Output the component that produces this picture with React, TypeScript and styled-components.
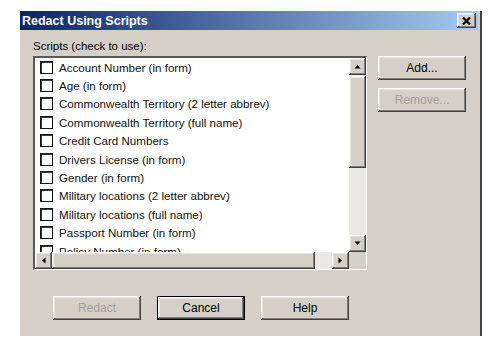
import React from "react";
import styled, { createGlobalStyle, css } from "styled-components";

const GlobalStyle = createGlobalStyle`
  html, body { margin: 0; padding: 0; background: #ffffff; }
  body { font-family: "Liberation Sans", Arial, sans-serif; }
`;

const raised = css`
  background: #d4d0c8;
  box-shadow: inset -1px -1px #404040, inset 1px 1px #ffffff,
    inset -2px -2px #808080, inset 2px 2px #e8e6e1;
`;

const Page = styled.div`
  padding: 11px 0 0 20px;
`;

const Dialog = styled.div`
  width: 460px;
  height: 325px;
  background: #d4d0c8;
  border-right: 2px solid #404040;
  display: flex;
  flex-direction: column;
`;

const TitleBar = styled.div`
  height: 19px;
  background: linear-gradient(to right, #0a246a, #a6caf0);
  display: flex;
  align-items: center;
  justify-content: space-between;
  padding: 0 2px 0 2px;
  width: 458px;
  box-sizing: border-box;
`;

const Title = styled.span`
  color: #ffffff;
  font-weight: bold;
  font-size: 12.5px;
`;

const CloseButton = styled.div`
  ${raised};
  width: 19px;
  height: 15px;
  display: flex;
  align-items: center;
  justify-content: center;
`;

const Body = styled.div`
  padding: 9px 13px 0 13px;
  display: flex;
  flex-direction: column;
`;

const Label = styled.div`
  font-size: 11.5px;
  line-height: 14px;
  color: #000;
  margin-bottom: 3px;
`;

const MainRow = styled.div`
  display: flex;
  gap: 11px;
  align-items: flex-start;
`;

const ListBox = styled.div`
  width: 334px;
  height: 214px;
  box-sizing: border-box;
  border-style: solid;
  border-width: 2px 1px 1px 2px;
  border-color: #5a5a5a #ffffff #ffffff #5a5a5a;
  background: #ffffff;
  display: grid;
  grid-template-columns: 1fr 17px;
  grid-template-rows: 1fr 17px;
`;

const Items = styled.div`
  overflow: hidden;
  background: #ffffff;
`;

const Row = styled.div`
  height: 18.4px;
  display: flex;
  align-items: center;
  gap: 6px;
  padding-left: 5px;
  font-size: 11.6px;
  color: #111;
  white-space: nowrap;
`;

const Check = styled.span`
  width: 13px;
  height: 13px;
  box-sizing: border-box;
  border: 1px solid #111;
  box-shadow: inset 1px 1px #3a3a3a;
  background: #ffffff;
  flex: none;
`;

const VScroll = styled.div`
  display: flex;
  flex-direction: column;
  background: #ebe9e4;
`;

const HScroll = styled.div`
  display: flex;
  background: #ebe9e4;
`;

const Corner = styled.div`
  background: #d4d0c8;
`;

const ArrowButton = styled.div`
  ${raised};
  width: 17px;
  height: 17px;
  flex: none;
  display: flex;
  align-items: center;
  justify-content: center;
`;

const VThumb = styled.div<{ $top: number; $size: number }>`
  ${raised};
  margin-top: ${(p) => p.$top}px;
  height: ${(p) => p.$size}px;
  flex: none;
`;

const HThumb = styled.div<{ $size: number }>`
  ${raised};
  width: ${(p) => p.$size}px;
  flex: none;
`;

const Spacer = styled.div`
  flex: 1;
`;

const SideButtons = styled.div`
  display: flex;
  flex-direction: column;
  gap: 8px;
`;

const Button = styled.div<{ $disabled?: boolean; $default?: boolean }>`
  ${raised};
  width: 88px;
  height: 24px;
  box-sizing: border-box;
  display: flex;
  align-items: center;
  justify-content: center;
  font-size: 12px;
  color: ${(p) => (p.$disabled ? "#a3a09a" : "#000")};
  ${(p) =>
    p.$default &&
    css`
      border: 1px solid #000;
    `}
`;

const BottomRow = styled.div`
  display: flex;
  gap: 16px;
  margin-top: 26px;
  padding-left: 20px;
`;

type Dir = "up" | "down" | "left" | "right";

const Arrow = ({ dir }: { dir: Dir }) => {
  const pts: Record<Dir, string> = {
    up: "0.5,4.5 3.5,1 6.5,4.5",
    down: "0.5,0.5 3.5,4 6.5,0.5",
    left: "4.5,0.5 1,3.5 4.5,6.5",
    right: "0.5,0.5 4,3.5 0.5,6.5",
  };
  const vertical = dir === "up" || dir === "down";
  return (
    <svg width={vertical ? 7 : 5} height={vertical ? 5 : 7} viewBox={vertical ? "0 0 7 5" : "0 0 5 7"}>
      <polygon points={pts[dir]} fill="#000" />
    </svg>
  );
};

const scripts = [
  "Account Number (in form)",
  "Age (in form)",
  "Commonwealth Territory (2 letter abbrev)",
  "Commonwealth Territory (full name)",
  "Credit Card Numbers",
  "Drivers License (in form)",
  "Gender (in form)",
  "Military locations (2 letter abbrev)",
  "Military locations (full name)",
  "Passport Number (in form)",
  "Policy Number (in form)",
];

export default function App() {
  return (
    <>
      <GlobalStyle />
      <Page>
        <Dialog>
          <TitleBar>
            <Title>Redact Using Scripts</Title>
            <CloseButton>
              <svg width="9" height="8" viewBox="0 0 9 8">
                <path d="M1 0.5 L8 7.5 M8 0.5 L1 7.5" stroke="#000" strokeWidth="2.2" />
              </svg>
            </CloseButton>
          </TitleBar>
          <Body>
            <Label>Scripts (check to use):</Label>
            <MainRow>
              <ListBox>
                <Items>
                  {scripts.map((s) => (
                    <Row key={s}>
                      <Check />
                      {s}
                    </Row>
                  ))}
                </Items>
                <VScroll>
                  <ArrowButton>
                    <Arrow dir="up" />
                  </ArrowButton>
                  <VThumb $top={1} $size={92} />
                  <Spacer />
                  <ArrowButton>
                    <Arrow dir="down" />
                  </ArrowButton>
                </VScroll>
                <HScroll>
                  <ArrowButton>
                    <Arrow dir="left" />
                  </ArrowButton>
                  <HThumb $size={263} />
                  <Spacer />
                  <ArrowButton>
                    <Arrow dir="right" />
                  </ArrowButton>
                </HScroll>
                <Corner />
              </ListBox>
              <SideButtons>
                <Button>Add...</Button>
                <Button $disabled>Remove...</Button>
              </SideButtons>
            </MainRow>
            <BottomRow>
              <Button $disabled>Redact</Button>
              <Button $default>Cancel</Button>
              <Button>Help</Button>
            </BottomRow>
          </Body>
        </Dialog>
      </Page>
    </>
  );
}
